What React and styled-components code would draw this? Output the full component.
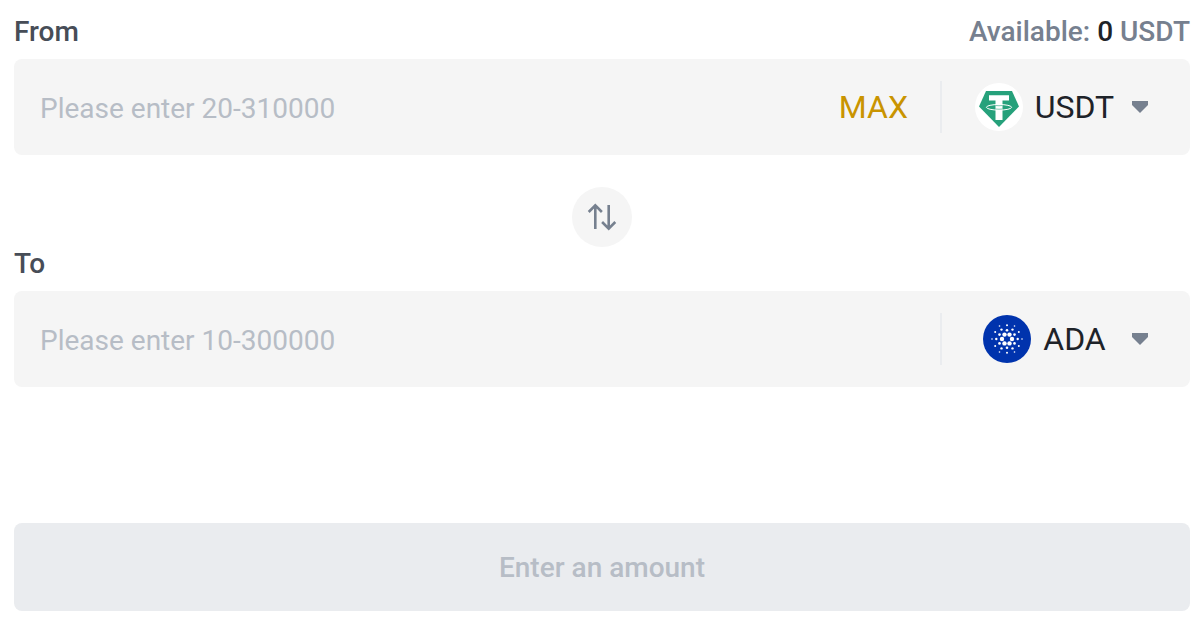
import React, { useState } from 'react'
import styled, { createGlobalStyle } from 'styled-components'

const TetherIcon = () => (
    <CoinSvg viewBox="0 0 48 48" aria-hidden="true">
        <circle cx="24" cy="24" r="24" fill="#fff" />
        <path d="M11 8h26l7 15.5L24 44 4 23.5z" fill="#26a17b" />
        <path d="M14 12.300h20v5.200h-6.500V37h-7V17.500H14z" fill="#fff" />
        <ellipse cx="24" cy="24.3" rx="12.6" ry="2.8" stroke="#fff" strokeWidth="1" fill="none" />
        <path d="M20.5 22.5c2 .3 5 .3 7 0M20.5 26c2 .3 5 .3 7 0" stroke="#26a17b" strokeWidth="0.6" fill="none" />
    </CoinSvg>
)

const cardanoDots = [
    [5, 0, 2.2], [2.5, 4.4, 2.2],
    [0, 8.7, 1.3], [7.5, 4.4, 1.3],
    [10.7, 0, 1.2], [5.5, 9.4, 1.2],
    [11.8, 7, 1], [0, 13.7, 1],
    [15, 0, 0.8], [7.5, 13, 0.8],
]

const CardanoIcon = () => (
    <CoinSvg viewBox="-24 -24 48 48" aria-hidden="true">
        <circle r="24" fill="#0033ad" />
        {cardanoDots.map(([x, y, r]) => (
            <g key={`${x},${y}`} fill="#fff">
                <circle cx={x} cy={y} r={r} />
                <circle cx={-x} cy={-y} r={r} />
                {x !== 0 && y !== 0 && <circle cx={-x} cy={y} r={r} />}
                {x !== 0 && y !== 0 && <circle cx={x} cy={-y} r={r} />}
            </g>
        ))}
    </CoinSvg>
)

const icons = { USDT: TetherIcon, ADA: CardanoIcon }

const AmountField = ({ id, label, available, placeholder, coin, onCoinChange, hasMax }) => {
    const [amount, setAmount] = useState('')
    const Icon = icons[coin]
    return (
        <section>
            <FieldHeader>
                <FieldLabel htmlFor={id}>{label}</FieldLabel>
                {available && <Available>Available: <b>{available}</b> {coin}</Available>}
            </FieldHeader>
            <FieldBox>
                <AmountInput
                    id={id}
                    inputMode="decimal"
                    placeholder={placeholder}
                    value={amount}
                    onChange={e => setAmount(e.target.value)}
                />
                {hasMax && <MaxButton type="button">MAX</MaxButton>}
                <Divider />
                <CoinPicker>
                    <Coin>
                        <Icon />
                        <CoinSelect
                            aria-label={`${label} coin`}
                            value={coin}
                            onChange={e => onCoinChange(e.target.value)}
                        >
                            <option>USDT</option>
                            <option>ADA</option>
                        </CoinSelect>
                    </Coin>
                    <Caret viewBox="0 0 18 12" aria-hidden="true">
                        <path d="M1 0h16v4L9 12 1 4z" />
                    </Caret>
                </CoinPicker>
            </FieldBox>
        </section>
    )
}

const App = () => {
    const [from, setFrom] = useState('USDT')
    const [to, setTo] = useState('ADA')

    const swap = () => {
        setFrom(to)
        setTo(from)
    }

    return (
        <Form onSubmit={e => e.preventDefault()}>
            <GlobalStyle />
            <AmountField
                id="from"
                label="From"
                available="0"
                placeholder="Please enter 20-310000"
                coin={from}
                onCoinChange={setFrom}
                hasMax
            />
            <SwapButton type="button" aria-label="Swap coins" onClick={swap}>
                <svg width="30" height="30" viewBox="0 0 30 30">
                    <path d="M8.3 27V3.5M1.7 10l6.6-6.6 6.6 6.6M21.7 3v23.5M15.1 20l6.6 6.6 6.6-6.6" />
                </svg>
            </SwapButton>
            <AmountField
                id="to"
                label="To"
                placeholder="Please enter 10-300000"
                coin={to}
                onCoinChange={setTo}
            />
            <SubmitButton disabled>Enter an amount</SubmitButton>
        </Form>
    )
}

export default App

const GlobalStyle = createGlobalStyle`
    * {
        box-sizing: border-box;
    }
    body {
        margin: 0;
        background: #fff;
    }
    body, input, button, select {
        font-family: Roboto, "Liberation Sans", sans-serif;
    }
`
const Form = styled.form`
    display: flex;
    flex-direction: column;
    padding: 15px 11px 28px 14px;
`
const FieldHeader = styled.div`
    display: flex;
    justify-content: space-between;
    margin-bottom: 10px;
    font-size: 28px;
    line-height: 34px;
    font-weight: 500;
`
const FieldLabel = styled.label`
    color: #474d57;
`
const Available = styled.span`
    color: #76808f;

    b {
        color: #1e2329;
        font-weight: 500;
    }
`
const FieldBox = styled.div`
    display: flex;
    align-items: center;
    height: 96px;
    border-radius: 8px;
    background: #f5f5f5;
`
const AmountInput = styled.input`
    flex: 1;
    min-width: 0;
    height: 100%;
    padding: 2px 26px 0;
    border: 0;
    outline: none;
    background: transparent;
    color: #1e2329;
    font-size: 28px;

    &::placeholder {
        color: #b7bdc6;
        opacity: 1;
    }
`
const MaxButton = styled.button`
    padding: 0 32px;
    border: 0;
    background: transparent;
    color: #c99400;
    font-size: 32px;
    line-height: 40px;
    cursor: pointer;
`
const Divider = styled.span`
    width: 2px;
    height: 52px;
    background: #eaecef;
`
const CoinPicker = styled.div`
    display: flex;
    align-items: center;
    width: 248px;
    padding: 0 41px 0 16px;
`
const Coin = styled.div`
    flex: 1;
    display: flex;
    justify-content: center;
    align-items: center;
    gap: 12px;
`
const CoinSvg = styled.svg`
    flex: none;
    width: 48px;
    height: 48px;
`
const CoinSelect = styled.select`
    appearance: none;
    field-sizing: content;
    padding: 0;
    border: 0;
    background: transparent;
    color: #1e2329;
    font-size: 32px;
    line-height: 40px;
    cursor: pointer;
`
const Caret = styled.svg`
    flex: none;
    width: 18px;
    height: 12px;
    fill: #76808f;
`
const SwapButton = styled.button`
    display: flex;
    align-items: center;
    justify-content: center;
    align-self: center;
    width: 60px;
    height: 60px;
    margin-top: 32px;
    padding: 0;
    border: 0;
    border-radius: 50%;
    background: #f5f5f5;
    cursor: pointer;

    path {
        fill: none;
        stroke: #76808f;
        stroke-width: 2.6;
    }
`
const SubmitButton = styled.button`
    height: 88px;
    margin-top: 136px;
    border: 0;
    border-radius: 8px;
    background: #eaecef;
    color: #b7bdc6;
    font-size: 28px;
    font-weight: 500;
`
